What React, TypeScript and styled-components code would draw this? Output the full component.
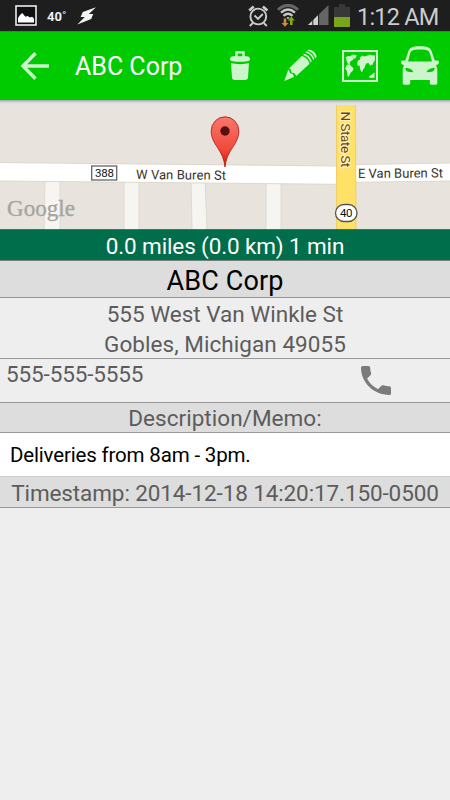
import React from 'react';
import styled, { createGlobalStyle } from 'styled-components';

const GlobalStyle = createGlobalStyle`
  * { box-sizing: border-box; }
  body { margin: 0; background: #eeeeee; font-family: Roboto, "Noto Sans", sans-serif; }
  svg { display: block; flex: none; }
`;

const Screen = styled.main`
  width: 450px;
  height: 800px;
  display: flex;
  flex-direction: column;
  background: #eeeeee;
  overflow: hidden;
`;

const StatusBar = styled.header`
  height: 31px;
  flex: none;
  display: flex;
  align-items: center;
  justify-content: space-between;
  padding: 0 12px 0 15px;
  background: #1e1e1e;
`;

const StatusGroup = styled.div`
  display: flex;
  align-items: center;
  height: 31px;
`;

const Temperature = styled.span`
  width: 20px;
  margin: 1px 10px 0 10px;
  color: #f0f0f0;
  font-size: 13px;
  font-weight: 700;
  white-space: nowrap;
`;

const Clock = styled.span`
  margin: 3px 0 0 7px;
  width: 81px;
  color: #cccccc;
  font-size: 23.5px;
  line-height: 28px;
  letter-spacing: -0.8px;
  white-space: nowrap;
`;

const AppBar = styled.nav`
  height: 69px;
  flex: none;
  display: flex;
  align-items: center;
  background: #00cb00;
  border-top: 1px solid #07a807;
`;

const Title = styled.h1`
  margin: 0;
  padding-top: 2px;
  width: 155px;
  color: #ffffff;
  font-size: 25px;
  font-weight: 400;
  line-height: 30px;
  white-space: nowrap;
`;

const IconButton = styled.button<{ $width: number; $indent?: number }>`
  width: ${(p) => p.$width}px;
  height: 68px;
  padding: 0 0 1px ${(p) => p.$indent ?? 0}px;
  border: 0;
  background: none;
  display: flex;
  align-items: center;
`;

const BarShadow = styled.div`
  height: 5px;
  flex: none;
  background: linear-gradient(#a8a4a6 0, #b9b6b8 1px, #d2d1d4 2px, #e0e0e3 3px, #e3e3e5 5px);
`;

const Row = styled.section<{ $height: number; $tone?: string; $line?: string; $top?: number }>`
  height: ${(p) => p.$height}px;
  flex: none;
  display: flex;
  flex-direction: column;
  align-items: center;
  padding-top: ${(p) => p.$top ?? 0}px;
  background: ${(p) => p.$tone ?? '#eeeeee'};
  border-bottom: 1px solid ${(p) => p.$line ?? '#999999'};
`;

const Text = styled.div<{ $size: number; $color?: string; $spacing?: number; $leading?: number }>`
  font-size: ${(p) => p.$size}px;
  line-height: ${(p) => p.$leading ?? 30}px;
  letter-spacing: ${(p) => p.$spacing ?? 0}px;
  color: ${(p) => p.$color ?? '#5c5c5c'};
  white-space: nowrap;
`;

const PhoneRow = styled(Row)`
  flex-direction: row;
  align-items: flex-start;
  justify-content: space-between;
  padding-left: 6px;
  padding-right: 59px;
`;

const PhoneButton = styled.button`
  padding: 0;
  border: 0;
  background: none;
  margin-top: 7px;
`;

const MemoRow = styled(Row)`
  align-items: flex-start;
  padding-left: 10px;
`;

const tint = '#ccf5cc';

const PictureIcon = () => (
  <svg width="22" height="21" viewBox="0 0 22 21">
    <rect x="1" y="1" width="20" height="19" fill="#101010" stroke="#eee9f2" strokeWidth="1.6" />
    <path d="M3 17.5V13l2-3 2.3-2 2 2.5 1.4 1.3 2-.8 2.2 1.5 2.3-.8 1.8 2v3.8z" fill="#ffffff" />
  </svg>
);

const BoltIcon = () => (
  <svg width="20" height="18" viewBox="0 0 20 18">
    <path d="M19 .3 5.8 5 3.6 10h4.2L.3 17.5 14.2 12l2-5h-4.4z" fill="#f3f3f3" />
  </svg>
);

const AlarmIcon = () => (
  <svg width="21" height="22" viewBox="0 0 21 22">
    <g fill="none" stroke="#cccccc" strokeWidth="1.9">
      <circle cx="10.3" cy="11.5" r="7.9" />
      <path d="m6.5 10.5 3.5 3.5 4.800-5M4.8 18l-3 3M15.8 18l3 3" />
      <path d="m1.2 5.5 4.5-4M14.9 1.5l4.5 4" strokeWidth="2.6" />
    </g>
  </svg>
);

const WifiIcon = () => (
  <svg width="22" height="23" viewBox="0 0 22 23">
    <path d="M1 5.8C7-.1 15-.1 21 5.8" fill="none" stroke="#676767" strokeWidth="3" />
    <g fill="none" stroke="#c8c8c8" strokeWidth="2.4">
      <path d="M4 8.6c4.5-4 9.5-4 14 0" />
      <path d="M6.500 11.800c2.900-2.500 6.100-2.500 9 0" />
    </g>
    <path d="m9.500 13.500 1.500-.6 1.500.6-1.500 2z" fill="#c8c8c8" />
    <path d="M6.700 14.500h2.600V19h2.200L8 22.700 4.500 19h2.200z" fill="#d28b36" />
    <path d="M13 21v-4.500h-2.200l3.500-4 3.500 4h-2.200V21z" fill="#7fad12" />
  </svg>
);

const SignalIcon = () => (
  <svg width="21" height="21" viewBox="0 0 21 21">
    <path d="M20.5 0v20H0z" fill="#656565" />
    <path d="M10 10.3V20H0z" fill="#d0d0d0" />
    <path d="M4.8 14v6M10.6 8v12" stroke="#1e1e1e" strokeWidth="1" />
  </svg>
);

const BatteryIcon = () => (
  <svg width="16" height="23" viewBox="0 0 16 23">
    <path d="M5 0h6v3h5v20H0V3h5z" fill="#383838" />
    <path d="M0 13h16v10H0z" fill="#79a51b" />
  </svg>
);

const BackIcon = () => (
  <svg width="30" height="28" viewBox="0 0 30 28">
    <path d="M29 14H3M15.500 1.2 3 14l12.500 12.7" fill="none" stroke={tint} strokeWidth="3.4" />
  </svg>
);

const TrashIcon = () => (
  <svg width="20" height="29" viewBox="0 0 20 29">
    <path d="M6.500 6V1.400h7V6" fill="none" stroke={tint} strokeWidth="2.400" />
    <path d="M3.200 5.200h13.600c1.800 0 3.200 1 3.200 2.300v1.200c0 1.200-4.500 2.100-10 2.100S0 9.900 0 8.700V7.500c0-1.300 1.400-2.300 3.200-2.300z" fill={tint} />
    <path d="M1 12c5 1.500 13 1.500 18 0l-1 14.200c-.1 1.800-1 2.800-2.800 2.800H4.800C3 29 2.100 28 2 26.200z" fill={tint} />
  </svg>
);

const PencilIcon = () => (
  <svg width="33" height="33" viewBox="0 0 33 33">
    <g fill={tint}>
      <path d="M.3 32 4.200 20.800l1 .7.800 2.800 3 .8.900 3z" />
      <path d="M5.200 19.300 17.800 7c3.500.7 6.800 4 7.700 7.700L12.300 27l-1.800-2.800-3-.8-.8-3z" />
      <path d="m19 5.900 1.100-1.100c3.600.8 6.700 4 7.600 7.500l-1.200 1.200c-1.100-3.900-3.700-6.600-7.500-7.600z" />
      <path d="m21.500 3.400 1-1c3.500.5 7.200 4.200 7.800 7.600l-1.100 1.100c-1-3.900-4-6.800-7.700-7.700z" />
      <path d="M24 1.200c3.200-2.300 10.300 4.400 8 7.600l-.7.800C30.600 6 27.300 2.400 23.500 1.700z" />
    </g>
  </svg>
);

const WorldIcon = () => (
  <svg width="36" height="32" viewBox="0 0 36 32">
    <rect x="1" y="1" width="34" height="30" fill="none" stroke={tint} strokeWidth="2.1" />
    <g fill={tint}>
      <path d="M3.500 7.500 6 6l2.500.2 1.300-.7 1 2.200 1 1-1.600 1.700-1.500.6-1.100 2.300.6 1.700-2-1-1.500-2.500-.4-2.300z" />
      <path d="m9 5.400 2.600-.8 3.200.8-1.700 3.300-1-.2z" />
      <path d="m5.200 14.500 2.600.3 3.700 3.400-.7 2.600-2 1.600-2 4.300-1.300-.5-.5-5-1.800-2.900z" />
      <path d="m15.300 12.200 1-2 1.700-.4-.2-2.200 2.500-2.200 1.800 1.200 3.600-1.200 2-1 3 1.200 2.200-.3v5l-1.300 1.800-1 3-1.700-.7-.6 1.900-1.700-3.200-2 .2-1.500 2.100-.3 2.200-1.600 1.600-.6 2.300-1.400.5-1.200-3.500-.3-2.800-2.200-.2z" />
      <path d="m27 26.500 5.500-4v5.300L28 28z" />
    </g>
  </svg>
);

const CarIcon = () => (
  <svg width="38" height="39" viewBox="0 0 38 39">
    <path
      fill={tint}
      fillRule="evenodd"
      d="M4.300 14.500 7 6.200C8.300 2 10.500.3 19 .3S29.700 2 31 6.200l2.700 8.300h2.500c1.500 0 2 1 1.600 2.500-.3 1.300-1.300 2-2.800 2l1.300 4V37c0 1.200-.5 1.700-1.600 1.700h-4.200c-1.100 0-1.700-.5-1.700-1.700v-3H9.200v3c0 1.200-.6 1.700-1.700 1.700H3.300C2.200 38.700 1.700 38.200 1.700 37V23L3 19c-1.500 0-2.500-.7-2.800-2-.4-1.500.1-2.500 1.600-2.500zM7 15.500h24l-2-7.500C28 4.500 26.500 3.500 19 3.500S10 4.500 9 8zM4.300 22c0 2.200 1.500 3.800 4 3.900l4 .3c-.5-2.500-3.500-4.100-8-4.200zm29.400 0c-4.500.1-7.500 1.700-8 4.200l4-.3c2.500-.1 4-1.700 4-3.900z"
    />
  </svg>
);

const PhoneIcon = () => (
  <svg width="30" height="29" viewBox="3 3 18 18" preserveAspectRatio="none">
    <path
      fill="#7b7b7b"
      d="M6.620 10.790c1.440 2.830 3.760 5.140 6.590 6.590l2.200-2.200c.27-.27.670-.36 1.020-.24 1.120.37 2.330.57 3.570.57.55 0 1 .45 1 1V20c0 .55-.45 1-1 1-9.390 0-17-7.610-17-17 0-.55.45-1 1-1h3.500c.55 0 1 .45 1 1 0 1.250.2 2.450.57 3.570.11.35.03.74-.25 1.020z"
    />
  </svg>
);

const StreetMap = () => (
  <svg width="450" height="125" viewBox="0 105 450 125" fontFamily="Roboto, sans-serif">
    <defs>
      <linearGradient id="pin" x1="0" y1="0" x2="0" y2="1">
        <stop offset="0" stopColor="#f9786e" />
        <stop offset=".65" stopColor="#f2493b" />
        <stop offset="1" stopColor="#c6170d" />
      </linearGradient>
    </defs>
    <path d="M0 105h450v125H0z" fill="#e8e4dd" />
    <g fill="#f6f5f2" stroke="#dedacf" strokeWidth="1">
      <path d="M45 178h15v54H44zM124 178h15v54h-15zM191 178h14l2 54h-15zM266 178h15v54h-15z" />
    </g>
    <path d="M-1 162.500 337 166v18.300L-1 181z" fill="#ffffff" stroke="#dcd8cc" />
    <path d="M355 164.500 451 163v18l-96 1.300z" fill="#ffffff" stroke="#dcd8cc" />
    <path d="M336.500 104h19l.5 127h-19.500z" fill="#ffe168" stroke="#efcd69" />
    <rect x="91.700" y="166" width="25" height="14" fill="#ffffff" stroke="#666666" strokeWidth="1.300" />
    <text x="95" y="177.200" fontSize="11.500" textLength="19" fill="#111111">388</text>
    <text x="136" y="179" fontSize="13" textLength="90" fill="#3a342a" transform="rotate(.5 136 179)">W Van Buren St</text>
    <text x="358" y="178" fontSize="13" textLength="85" fill="#3a342a" transform="rotate(-.4 358 178)">E Van Buren St</text>
    <text
      transform="translate(341 111.500) rotate(90)"
      fontSize="13.500"
      textLength="56"
      fill="#694513"
      stroke="#fff0b3"
      strokeWidth="2.500"
      paintOrder="stroke"
    >
      N State St
    </text>
    <rect x="335.500" y="204.500" width="21.500" height="17" rx="8.500" fill="#ffffff" stroke="#555555" strokeWidth="1.300" />
    <text x="340" y="217.200" fontSize="11.500" textLength="12.500" fill="#111111">40</text>
    <path
      d="M225 167c-.8-8-3.500-13.500-7.500-19.500-3.500-5.300-6.300-10-6.300-16.500a13.800 14.200 0 0 1 27.600 0c0 6.500-2.800 11.200-6.300 16.500-4 6-6.700 11.500-7.500 19.500z"
      fill="url(#pin)"
      stroke="#b71d19"
      strokeWidth=".9"
    />
    <circle cx="225" cy="131" r="4.700" fill="#5b100d" />
    <text
      x="7"
      y="215.500"
      fontFamily="Liberation Serif, serif"
      fontSize="24"
      textLength="68"
      lengthAdjust="spacingAndGlyphs"
      fill="#a6a49f"
      stroke="#a6a49f"
      strokeWidth=".35"
    >
      Google
    </text>
    <path d="M0 229.800h450" stroke="#12382a" strokeWidth="1" />
  </svg>
);

const StatusGap = styled.span<{ $width: number }>`
  width: ${(p) => p.$width}px;
`;

export default function App() {
  return (
    <>
      <GlobalStyle />
      <Screen>
        <StatusBar>
          <StatusGroup>
            <PictureIcon />
            <Temperature>40˚</Temperature>
            <BoltIcon />
          </StatusGroup>
          <StatusGroup>
            <AlarmIcon />
            <StatusGap $width={8} />
            <WifiIcon />
            <StatusGap $width={9} />
            <SignalIcon />
            <StatusGap $width={5} />
            <BatteryIcon />
            <Clock>1:12 AM</Clock>
          </StatusGroup>
        </StatusBar>
        <AppBar>
          <IconButton $width={75} $indent={20} aria-label="Back"><BackIcon /></IconButton>
          <Title>ABC Corp</Title>
          <IconButton $width={54} aria-label="Delete"><TrashIcon /></IconButton>
          <IconButton $width={58} aria-label="Edit"><PencilIcon /></IconButton>
          <IconButton $width={59} aria-label="Map"><WorldIcon /></IconButton>
          <IconButton $width={40} aria-label="Drive"><CarIcon /></IconButton>
        </AppBar>
        <BarShadow />
        <StreetMap />
        <Row $height={31} $tone="#006d4b" $line="#777f7b" $top={1}>
          <Text $size={22.5} $color="#ffffff" $spacing={-0.13}>0.0 miles (0.0 km) 1 min</Text>
        </Row>
        <Row $height={37} $tone="#dddddd" $top={2}>
          <Text $size={27} $color="#000000" $leading={36} $spacing={0.15}>ABC Corp</Text>
        </Row>
        <Row $height={61} $top={1}>
          <Text $size={22.5}>555 West Van Winkle St</Text>
          <Text $size={22.5} $spacing={0.05}>Gobles, Michigan 49055</Text>
        </Row>
        <PhoneRow $height={44}>
          <Text $size={22.5} $spacing={-0.13}>555-555-5555</Text>
          <PhoneButton aria-label="Call"><PhoneIcon /></PhoneButton>
        </PhoneRow>
        <Row $height={30} $tone="#dddddd">
          <Text $size={22.5} $spacing={0.04}>Description/Memo:</Text>
        </Row>
        <MemoRow $height={44} $tone="#ffffff" $line="#cccccc" $top={7}>
          <Text $size={20.5} $color="#000000" $spacing={-0.17}>Deliveries from 8am - 3pm.</Text>
        </MemoRow>
        <Row $height={31} $tone="#dddddd" $top={1}>
          <Text $size={22.5} $spacing={-0.11}>Timestamp: 2014-12-18 14:20:17.150-0500</Text>
        </Row>
      </Screen>
    </>
  );
}
